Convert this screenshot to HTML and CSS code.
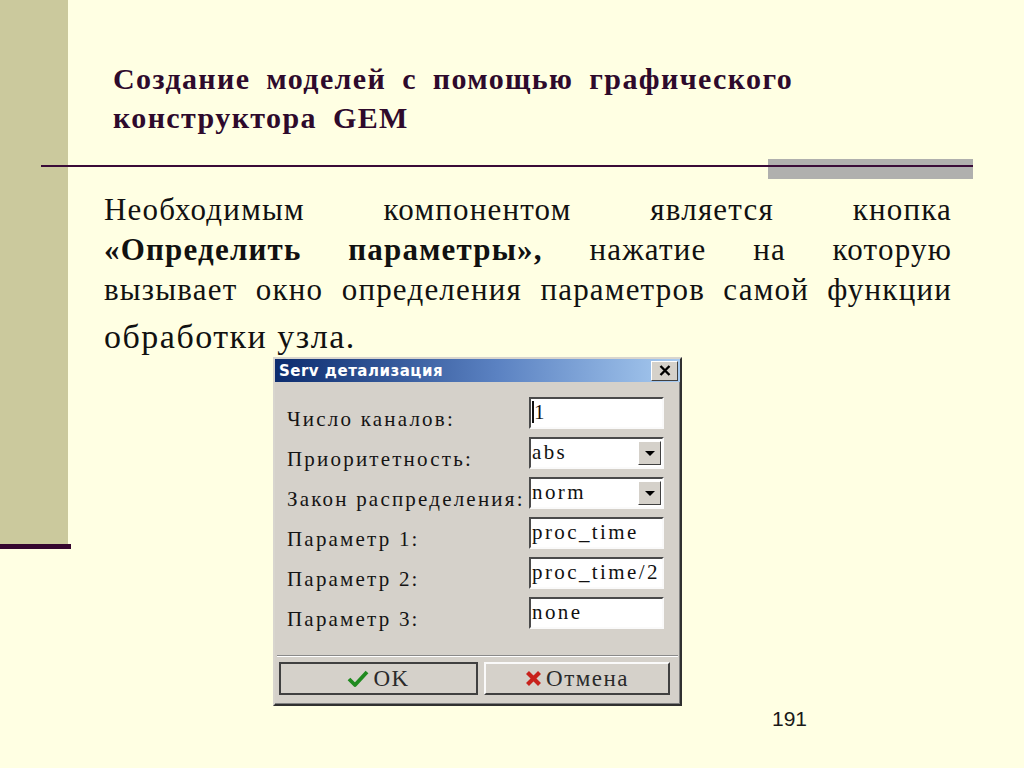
FILE: index.html
```html
<!DOCTYPE html>
<html lang="ru">
<head>
    <meta charset="UTF-8">
    <title>Создание моделей с помощью графического конструктора GEM</title>
    <link rel="stylesheet" href="styles.css">
</head>
<body>
    <div class="slide">
        <h1 class="slide-title">Создание моделей с помощью графического<br>конструктора GEM</h1>
        <div class="rule"></div>

        <p class="lead">Необходимым компонентом является кнопка<br><b>«Определить параметры»,</b> нажатие на которую<br>вызывает окно определения параметров самой функции</p>
        <p class="lead-last">обработки узла.</p>

        <!-- окно параметров -->
        <div class="dialog">
            <div class="titlebar">
                <span class="titlebar-text">Serv детализация</span>
                <span class="close-btn">
                    <svg width="12" height="11" viewBox="0 0 12 11"><path d="M1.5 1 L10.5 10 M10.5 1 L1.5 10" stroke="#000" stroke-width="2.4"/></svg>
                </span>
            </div>
            <div class="fields">
                <label>Число каналов:</label>
                <div class="field"><span class="caret"></span>1</div>

                <label>Приоритетность:</label>
                <div class="field combo">abs<span class="drop"><i></i></span></div>

                <label>Закон распределения:</label>
                <div class="field combo">norm<span class="drop"><i></i></span></div>

                <label>Параметр 1:</label>
                <div class="field">proc_time</div>

                <label>Параметр 2:</label>
                <div class="field">proc_time/2</div>

                <label>Параметр 3:</label>
                <div class="field">none</div>
            </div>
            <div class="separator"></div>
            <div class="buttons">
                <button class="btn btn-ok">
                    <svg width="22" height="17" viewBox="0 0 22 17"><path d="M2 9 L8 15 L20 2" fill="none" stroke="#1f8a1f" stroke-width="3.8" stroke-linejoin="round"/></svg>
                    OK
                </button>
                <button class="btn btn-cancel">
                    <svg width="17" height="17" viewBox="0 0 17 17"><path d="M2.5 2.5 L14.5 14.5 M14.5 2.5 L2.5 14.5" stroke="#c8221c" stroke-width="4.2"/></svg>
                    Отмена
                </button>
            </div>
        </div>

        <div class="page-num">191</div>
    </div>
</body>
</html>
```

FILE: styles.css
```css
body {
    margin: 0;
    padding: 0;
}

.slide {
    width: 1024px;
    height: 768px;
    overflow: hidden;
    box-sizing: border-box;
    padding-top: 59px;
    font-family: 'Liberation Serif', 'Times New Roman', serif;
    color: #111;
    background:
        linear-gradient(#35062f, #35062f) 0 544px / 71px 5px no-repeat,
        linear-gradient(#cbc99d, #cbc99d) 0 0 / 68px 544px no-repeat,
        #ffffe3;
}

.slide-title {
    margin: 0 0 0 113px;
    font-size: 30px;
    line-height: 39px;
    letter-spacing: 1.4px;
    word-spacing: 7px;
    font-weight: bold;
    color: #2e0a2c;
}

.rule {
    margin: 22px 0 0 41px;
    width: 932px;
    height: 20px;
    background:
        linear-gradient(#3a0b38, #3a0b38) 0 6px / 100% 2px no-repeat,
        linear-gradient(#b0b0ae, #b0b0ae) right top / 205px 20px no-repeat;
}

.lead {
    margin: 11px 0 0 104px;
    width: 848px;
    font-size: 31px;
    line-height: 40px;
    letter-spacing: 1.2px;
    text-align: justify;
    text-align-last: justify;
}

.lead-last {
    margin: 7px 0 0 104px;
    font-size: 34px;
    line-height: 40px;
    letter-spacing: 1.5px;
}

/* окно */
.dialog {
    margin: 0 0 0 273px;
    width: 409px;
    height: 349px;
    box-sizing: border-box;
    border: 2px solid #303030;
    border-top-color: #d8d5ce;
    border-left-color: #d8d5ce;
    background-color: #d5d1ca;
    box-shadow: inset -1px -1px 0 #808080;
}

.titlebar {
    height: 23px;
    display: flex;
    align-items: center;
    justify-content: space-between;
    padding: 0 2px 0 4px;
    background: linear-gradient(to right, #0c2c6e, #5b82c2 55%, #a8cbf0);
}

.titlebar-text {
    font-family: 'DejaVu Sans', sans-serif;
    font-size: 15px;
    font-weight: bold;
    letter-spacing: 0.5px;
    color: #fff;
}

.close-btn {
    width: 27px;
    height: 20px;
    display: flex;
    align-items: center;
    justify-content: center;
    box-sizing: border-box;
    background-color: #d5d1ca;
    border: 1px solid #fff;
    border-right-color: #404040;
    border-bottom-color: #404040;
}

.fields {
    display: grid;
    grid-template-columns: 242px 135px;
    grid-auto-rows: 32px;
    row-gap: 8px;
    padding: 15px 0 0 12px;
}

.fields label {
    font-size: 21px;
    line-height: 44px;
    letter-spacing: 2.2px;
    color: #141414;
    white-space: nowrap;
}

.field {
    position: relative;
    box-sizing: border-box;
    background-color: #fff;
    border: 2px solid #fafafa;
    border-top-color: #4a4a4a;
    border-left-color: #4a4a4a;
    padding: 0 0 0 1px;
    font-size: 21px;
    line-height: 26px;
    letter-spacing: 2.4px;
    color: #111;
    white-space: nowrap;
    overflow: hidden;
}

.caret {
    display: inline-block;
    width: 2px;
    height: 22px;
    background-color: #111;
    vertical-align: -4px;
}

.drop {
    position: absolute;
    right: 1px;
    top: 2px;
    width: 23px;
    height: 24px;
    box-sizing: border-box;
    background-color: #d5d1ca;
    border: 1px solid #fff;
    border-right-color: #404040;
    border-bottom-color: #404040;
    display: flex;
    align-items: center;
    justify-content: center;
}

.drop i {
    width: 0;
    height: 0;
    border-left: 5px solid transparent;
    border-right: 5px solid transparent;
    border-top: 5px solid #000;
}

.separator {
    margin: 26px 2px 0 2px;
    height: 1px;
    background-color: #8a8a8a;
    border-bottom: 1px solid #fff;
}

.buttons {
    display: flex;
    gap: 6px;
    padding: 5px 0 0 4px;
}

.btn {
    height: 33px;
    box-sizing: border-box;
    display: flex;
    align-items: center;
    justify-content: center;
    gap: 4px;
    padding: 0;
    background-color: #d5d1ca;
    border: 2px solid #fafafa;
    border-right-color: #404040;
    border-bottom-color: #404040;
    font-family: 'Liberation Serif', serif;
    font-size: 23px;
    letter-spacing: 1.5px;
    color: #2a2a2a;
}

.btn-ok {
    width: 199px;
    border-color: #404040;
}

.btn-cancel {
    width: 186px;
}

.page-num {
    margin: 1px 0 0 772px;
    font-family: 'Liberation Sans', Arial, sans-serif;
    font-size: 21px;
    line-height: 24px;
    color: #1a1a1a;
}
```
